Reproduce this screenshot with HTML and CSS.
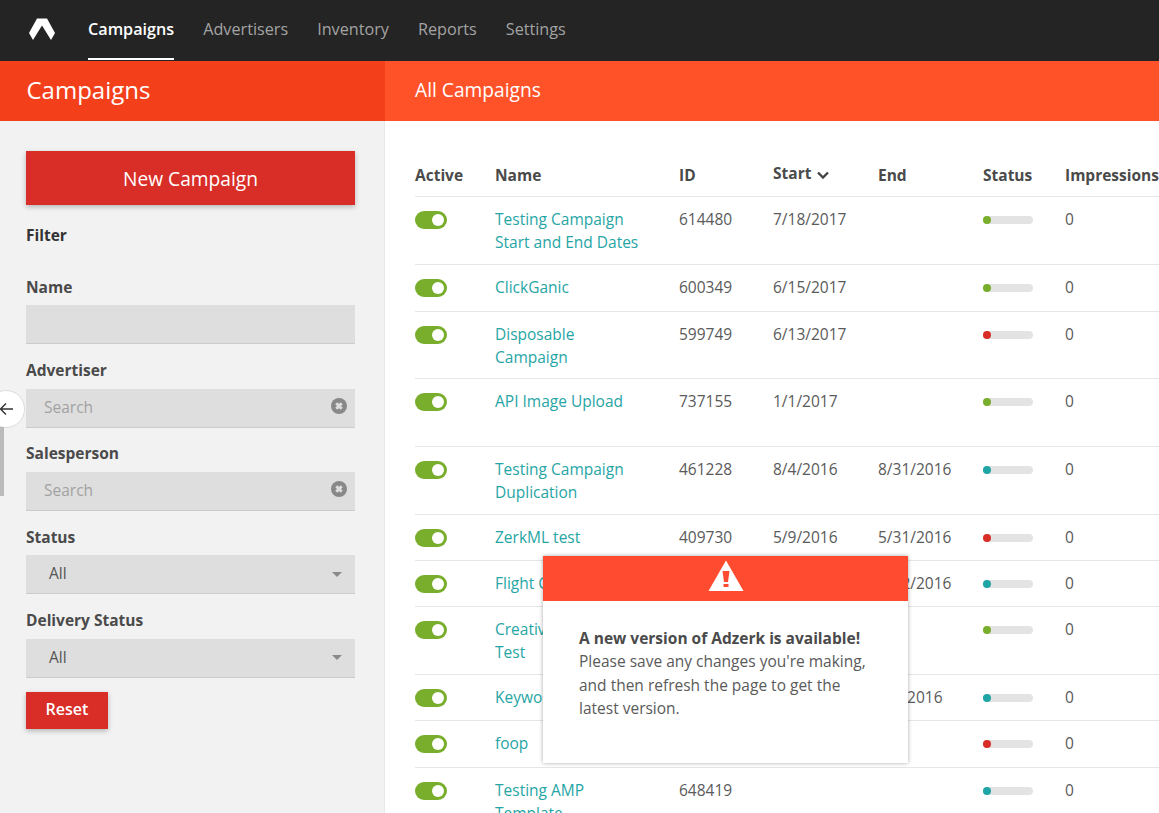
FILE: index.html
```html
<!DOCTYPE html>
<html lang="en">
<head>
<meta charset="utf-8">
<title>Campaigns</title>
<link rel="stylesheet" href="styles.css">
</head>
<body>
<header class="topbar">
  <svg class="logo" viewBox="0 0 26 22" width="26" height="22"><path d="M8 .5H18L26 15L22 22L13 7.5L4 22L0 15Z" fill="#fff"/></svg>
  <nav class="nav">
    <a class="nav-item is-active">Campaigns</a>
    <a class="nav-item">Advertisers</a>
    <a class="nav-item">Inventory</a>
    <a class="nav-item">Reports</a>
    <a class="nav-item">Settings</a>
  </nav>
</header>
<div class="columns">
  <aside class="left">
    <div class="left-head">Campaigns</div>
    <div class="sidebar">
      <button class="new-btn">New Campaign</button>
      <div class="filter-title">Filter</div>
      <div class="field field-first">
        <label class="label">Name</label>
        <div class="input"></div>
      </div>
      <div class="field">
        <label class="label">Advertiser</label>
        <div class="input"><span class="placeholder">Search</span>
          <svg class="clear" viewBox="0 0 16 16" width="16" height="16"><circle cx="8" cy="8" r="8" fill="#888"/><path d="M5.3 5.3L10.7 10.7M10.7 5.3L5.3 10.7" stroke="#ddd" stroke-width="3"/></svg>
        </div>
      </div>
      <div class="field">
        <label class="label">Salesperson</label>
        <div class="input"><span class="placeholder">Search</span>
          <svg class="clear" viewBox="0 0 16 16" width="16" height="16"><circle cx="8" cy="8" r="8" fill="#888"/><path d="M5.3 5.3L10.7 10.7M10.7 5.3L5.3 10.7" stroke="#ddd" stroke-width="3"/></svg>
        </div>
      </div>
      <div class="field">
        <label class="label">Status</label>
        <div class="input"><span class="value">All</span><span class="caret"></span></div>
      </div>
      <div class="field">
        <label class="label">Delivery Status</label>
        <div class="input"><span class="value">All</span><span class="caret"></span></div>
      </div>
      <button class="reset-btn">Reset</button>
    </div>
  </aside>
  <main class="right">
    <div class="right-head">All Campaigns</div>
    <div class="content">
      <table class="table">
        <colgroup>
          <col class="c-active"><col class="c-name"><col class="c-id"><col class="c-start"><col class="c-end"><col class="c-status"><col class="c-imp">
        </colgroup>
        <thead>
          <tr>
            <th>Active</th><th>Name</th><th>ID</th>
            <th><span class="sorted">Start <svg class="chev" viewBox="0 0 12 8" width="12" height="8"><path d="M1 1.5L6 6.5L11 1.5" fill="none" stroke="#444" stroke-width="2.4"/></svg></span></th>
            <th>End</th><th>Status</th><th>Impressions</th>
          </tr>
        </thead>
        <tbody>
          <tr><td><span class="toggle"></span></td><td><a class="link">Testing Campaign Start and End Dates</a></td><td>614480</td><td>7/18/2017</td><td></td><td><span class="bar"><span class="dot green"></span></span></td><td>0</td></tr>
          <tr class="wide"><td><span class="toggle"></span></td><td><a class="link">ClickGanic</a></td><td>600349</td><td>6/15/2017</td><td></td><td><span class="bar"><span class="dot green"></span></span></td><td>0</td></tr>
          <tr class="short"><td><span class="toggle"></span></td><td><a class="link">Disposable Campaign</a></td><td>599749</td><td>6/13/2017</td><td></td><td><span class="bar"><span class="dot red"></span></span></td><td>0</td></tr>
          <tr class="tall"><td><span class="toggle"></span></td><td><a class="link">API Image Upload</a></td><td>737155</td><td>1/1/2017</td><td></td><td><span class="bar"><span class="dot green"></span></span></td><td>0</td></tr>
          <tr><td><span class="toggle"></span></td><td><a class="link">Testing Campaign Duplication</a></td><td>461228</td><td>8/4/2016</td><td>8/31/2016</td><td><span class="bar"><span class="dot teal"></span></span></td><td>0</td></tr>
          <tr><td><span class="toggle"></span></td><td><a class="link">ZerkML test</a></td><td>409730</td><td>5/9/2016</td><td>5/31/2016</td><td><span class="bar"><span class="dot red"></span></span></td><td>0</td></tr>
          <tr><td><span class="toggle"></span></td><td><a class="link">Flight Cap</a></td><td>409112</td><td>5/2/2016</td><td>5/12/2016</td><td><span class="bar"><span class="dot teal"></span></span></td><td>0</td></tr>
          <tr><td><span class="toggle"></span></td><td><a class="link">Creative Targeting Test</a></td><td>402210</td><td>4/20/2016</td><td></td><td><span class="bar"><span class="dot green"></span></span></td><td>0</td></tr>
          <tr><td><span class="toggle"></span></td><td><a class="link">Keyword</a></td><td>398120</td><td>4/1/2016</td><td>4/2/2016</td><td><span class="bar"><span class="dot teal"></span></span></td><td>0</td></tr>
          <tr class="wide"><td><span class="toggle"></span></td><td><a class="link">foop</a></td><td>391004</td><td>3/9/2016</td><td></td><td><span class="bar"><span class="dot red"></span></span></td><td>0</td></tr>
          <tr><td><span class="toggle"></span></td><td><a class="link">Testing AMP Template</a></td><td>648419</td><td></td><td></td><td><span class="bar"><span class="dot teal"></span></span></td><td>0</td></tr>
        </tbody>
      </table>
    </div>
  </main>
</div>
<button class="back" aria-label="Back">
  <svg viewBox="0 0 14 14" width="14" height="14"><path d="M14 7H1.5M7 1.5L1.5 7L7 12.5" fill="none" stroke="#333" stroke-width="1.4"/></svg>
</button>
<div class="side-scroll"></div>
<div class="modal">
  <div class="modal-head">
    <svg viewBox="0 0 36 32" width="36" height="32"><path d="M18 0.5L35.5 31H0.5Z" fill="#fff"/><path d="M14.5 11H21.5L20 22H16Z M15.5 24H20.5V27H15.5Z" fill="#ff4b2f"/></svg>
  </div>
  <div class="modal-body">
    <strong>A new version of Adzerk is available!</strong><br>
    Please save any changes you're making, and then refresh the page to get the latest version.
  </div>
</div>
</body>
</html>
```
FILE: styles.css
```css
* { box-sizing: border-box; }
html, body { margin: 0; height: 100%; overflow: hidden; }
body {
  font-family: "Open Sans", "Liberation Sans", sans-serif;
  font-size: 15.5px;
  color: #5a5a5a;
  background: #fff;
  display: flex;
  flex-direction: column;
}
.topbar {
  height: 61px;
  flex: none;
  background: #242424;
  display: flex;
  align-items: center;
  padding-left: 29px;
}
.logo { flex: none; margin-top: -3px; }
.nav { display: flex; gap: 29px; margin-left: 33px; height: 100%; }
.nav-item {
  color: #a3a3a3;
  font-size: 16.2px;
  line-height: 58px;
  height: 60px;
  font-weight: 400;
}
.nav-item.is-active {
  color: #fff;
  font-weight: 600;
  border-bottom: 2px solid #fff;
}
.columns { flex: 1; display: flex; min-height: 0; }
.left { width: 385px; flex: none; display: flex; flex-direction: column; }
.left-head {
  height: 60px;
  flex: none;
  background: #f43f1b;
  color: #fff;
  font-size: 24px;
  line-height: 58px;
  padding-left: 26.5px;
}
.sidebar {
  flex: 1;
  background: #f2f2f2;
  border-right: 1px solid #e9e9e9;
  padding: 30px 30px 0 26px;
}
.new-btn {
  display: block;
  width: 329px;
  height: 54px;
  border: 0;
  background: #d92d27;
  color: #fff;
  font: 400 19.2px "Open Sans", sans-serif;
  box-shadow: 0 2px 5px rgba(0,0,0,.25);
}
.filter-title {
  margin-top: 18px;
  font-weight: 700;
  color: #333;
  line-height: 24px;
}
.field { width: 329px; margin-top: 14.9px; }
.field-first { margin-top: 28.7px; }
.label {
  display: block;
  font-weight: 700;
  color: #4a4a4a;
  line-height: 23.5px;
  margin-bottom: 6px;
}
.input {
  height: 39px;
  background: #dedede;
  border-bottom: 1px solid #ccc;
  display: flex;
  align-items: center;
  justify-content: space-between;
  padding: 0 8px 2px 18px;
}
.placeholder { color: #a2a2a2; }
.value { color: #555; padding-left: 5px; }
.clear { flex: none; margin-top: -2px; }
.caret {
  width: 0;
  height: 0;
  margin-right: 5px;
  margin-top: 2px;
  border-left: 5px solid transparent;
  border-right: 5px solid transparent;
  border-top: 5px solid #8a8a8a;
}
.reset-btn {
  display: block;
  margin-top: 14px;
  width: 82px;
  height: 37px;
  padding: 0 0 2px;
  border: 0;
  background: #d92d27;
  color: #fff;
  font: 600 16px "Open Sans", sans-serif;
  box-shadow: 0 2px 5px rgba(0,0,0,.25);
}
.right { flex: 1; min-width: 0; display: flex; flex-direction: column; }
.right-head {
  height: 60px;
  flex: none;
  background: #ff5228;
  color: #fff;
  font-size: 19.2px;
  font-weight: 400;
  line-height: 58px;
  padding-left: 30px;
}
.content { flex: 1; overflow: hidden; padding: 30px 0 0 30px; }
.table { border-collapse: collapse; table-layout: fixed; width: 744px; }
.c-active { width: 80px; }
.c-name { width: 184px; }
.c-id { width: 94px; }
.c-start { width: 105px; }
.c-end { width: 105px; }
.c-status { width: 82px; }
.c-imp { width: 94px; }
th {
  height: 45px;
  padding: 0 0 9px;
  text-align: left;
  vertical-align: bottom;
  font-weight: 700;
  color: #4a4a4a;
  line-height: 24px;
  white-space: nowrap;
  border-bottom: 1px solid #e6e6e6;
}
.sorted { position: relative; top: -2px; }
.chev { margin-left: 2px; }
td {
  height: 46px;
  padding: 11px 0 9px;
  vertical-align: top;
  line-height: 23.5px;
  border-bottom: 1px solid #e6e6e6;
}
.wide td { height: 47px; }
.short td { padding-bottom: 8px; }
.tall td { height: 68px; }
.link { display: block; max-width: 150px; color: #26a5a5; }
.toggle {
  display: block;
  position: relative;
  width: 32px;
  height: 18px;
  margin-top: 3px;
  border-radius: 9px;
  background: #78ae2c;
}
.toggle::after {
  content: "";
  position: absolute;
  top: 3px;
  right: 3px;
  width: 12px;
  height: 12px;
  border-radius: 50%;
  background: #fff;
}
.bar {
  display: block;
  width: 50px;
  height: 8px;
  margin-top: 8px;
  border-radius: 4px;
  background: #e3e3e3;
}
.dot { display: block; width: 8px; height: 8px; border-radius: 50%; }
.green { background: #78ae2c; }
.red { background: #d92d27; }
.teal { background: #1fa5a5; }
.back {
  position: absolute;
  left: -13px;
  top: 390px;
  width: 38px;
  height: 38px;
  padding: 0;
  border: 1px solid #ddd;
  border-radius: 50%;
  background: #fff;
  display: flex;
  align-items: center;
  justify-content: center;
}
.side-scroll {
  position: absolute;
  left: 0;
  top: 427px;
  width: 4px;
  height: 69px;
  background: #bbb;
}
.modal {
  position: absolute;
  left: 543px;
  top: 556px;
  width: 365px;
  height: 207px;
  background: #fff;
  box-shadow: 0 0 4px rgba(0,0,0,.35);
}
.modal-head {
  height: 45px;
  background: #ff4b2f;
  display: flex;
  justify-content: center;
  padding-top: 4px;
}
.modal-body {
  padding: 25.5px 36px 0;
  line-height: 23.5px;
  color: #5a5a5a;
}
.modal-body strong { color: #4a4a4a; font-weight: 700; }
```
